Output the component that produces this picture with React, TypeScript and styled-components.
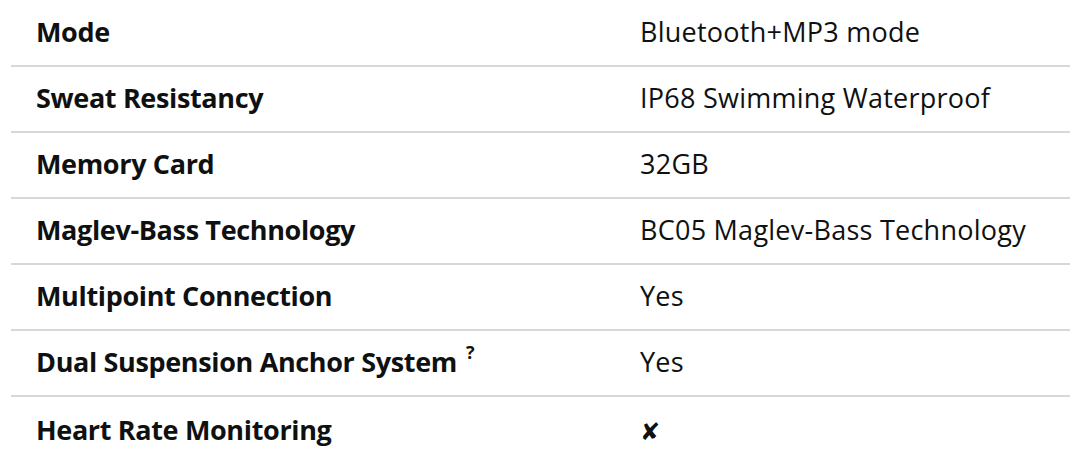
import React from 'react';
import styled, { createGlobalStyle } from 'styled-components';

const GlobalStyle = createGlobalStyle`
   html, body {
      margin: 0;
      padding: 0;
      background: #ffffff;
   }
   body {
      font-family: 'Open Sans', 'Noto Sans', 'Liberation Sans', sans-serif;
      color: #0f1111;
   }
`;

const Wrapper = styled.div`
   width: 1070px;
   height: 464px;
   overflow: hidden;
   padding: 1px 0 0 11px;
   box-sizing: border-box;
`;

const Table = styled.div`
   display: flex;
   flex-direction: column;
   width: 1080px;
`;

const Row = styled.div<{ $last?: boolean }>`
   display: grid;
   grid-template-columns: 629px 1fr;
   align-items: center;
   box-sizing: border-box;
   height: ${({ $last }) => ($last ? '64px' : '66px')};
   padding-bottom: ${({ $last }) => ($last ? '0' : '3px')};
   border-bottom: ${({ $last }) => ($last ? 'none' : '2px solid #d5d9d9')};
`;

const Label = styled.div`
   padding-left: 25px;
   font-size: 27px;
   font-weight: 700;
   letter-spacing: -0.35px;
   white-space: nowrap;
`;

const Value = styled.div`
   font-size: 27px;
   font-weight: 400;
   letter-spacing: 0.25px;
   white-space: nowrap;
`;

const Hint = styled.sup`
   font-size: 18px;
   margin-left: 9px;
   position: relative;
   top: -3px;
`;

const Cross = styled.span`
   font-family: 'DejaVu Sans', sans-serif;
   font-size: 24px;
`;

const specs = [
   { name: 'Mode', value: 'Bluetooth+MP3 mode' },
   { name: 'Sweat Resistancy', value: 'IP68 Swimming Waterproof' },
   { name: 'Memory Card', value: '32GB' },
   { name: 'Maglev-Bass Technology', value: 'BC05 Maglev-Bass Technology' },
   { name: 'Multipoint Connection', value: 'Yes' },
   { name: 'Dual Suspension Anchor System', value: 'Yes', hint: true },
   { name: 'Heart Rate Monitoring', value: null },
];

function App(): React.ReactElement {
   return (
      <>
         <GlobalStyle />
         <Wrapper>
            <Table>
               {specs.map((spec, i) => (
                  <Row key={spec.name} $last={i === specs.length - 1}>
                     <Label>
                        {spec.name}
                        {spec.hint && <Hint>?</Hint>}
                     </Label>
                     <Value>{spec.value ?? <Cross>✘</Cross>}</Value>
                  </Row>
               ))}
            </Table>
         </Wrapper>
      </>
   );
}

export default App;
